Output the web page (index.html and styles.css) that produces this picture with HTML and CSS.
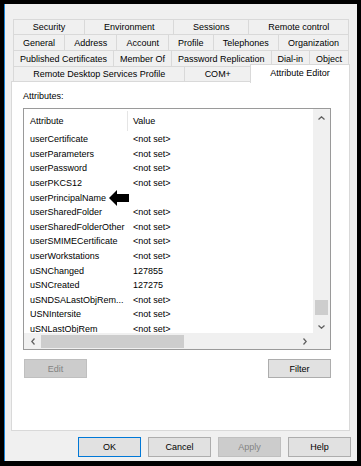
FILE: index.html
```html
<!DOCTYPE html>
<html lang="en">
<head>
    <meta charset="UTF-8">
    <meta name="viewport" content="width=device-width, initial-scale=1.0">
    <title>Properties</title>
    <link rel="stylesheet" href="styles.css">
</head>
<body>
    <div class="dialog">
        <div class="tabs">
            <div class="tab-row row-a">
                <div class="tab">Security</div>
                <div class="tab">Environment</div>
                <div class="tab">Sessions</div>
                <div class="tab">Remote control</div>
            </div>
            <div class="tab-row row-b">
                <div class="tab">General</div>
                <div class="tab">Address</div>
                <div class="tab">Account</div>
                <div class="tab">Profile</div>
                <div class="tab">Telephones</div>
                <div class="tab">Organization</div>
            </div>
            <div class="tab-row row-b">
                <div class="tab">Published Certificates</div>
                <div class="tab">Member Of</div>
                <div class="tab">Password Replication</div>
                <div class="tab">Dial-in</div>
                <div class="tab">Object</div>
            </div>
            <div class="tab-row row-a">
                <div class="tab">Remote Desktop Services Profile</div>
                <div class="tab">COM+</div>
                <div class="tab selected">Attribute Editor</div>
            </div>
        </div>

        <div class="panel">
            <div class="label">Attributes:</div>
            <div class="list">
                <div class="view">
                    <div class="list-head">
                        <div class="col-attr">Attribute</div>
                        <div class="col-val">Value</div>
                    </div>
                    <div class="row"><div class="attr">userCertificate</div><div class="val">&lt;not set&gt;</div></div>
                    <div class="row"><div class="attr">userParameters</div><div class="val">&lt;not set&gt;</div></div>
                    <div class="row"><div class="attr">userPassword</div><div class="val">&lt;not set&gt;</div></div>
                    <div class="row"><div class="attr">userPKCS12</div><div class="val">&lt;not set&gt;</div></div>
                    <div class="row">
                        <div class="attr">userPrincipalName
                            <svg class="pointer" width="20" height="16" viewBox="0 0 20 16"><polygon points="0,8 8,0 8,4 20,4 20,12 8,12 8,16" fill="#000"/></svg>
                        </div>
                        <div class="val"></div>
                    </div>
                    <div class="row"><div class="attr">userSharedFolder</div><div class="val">&lt;not set&gt;</div></div>
                    <div class="row"><div class="attr">userSharedFolderOther</div><div class="val">&lt;not set&gt;</div></div>
                    <div class="row"><div class="attr">userSMIMECertificate</div><div class="val">&lt;not set&gt;</div></div>
                    <div class="row"><div class="attr">userWorkstations</div><div class="val">&lt;not set&gt;</div></div>
                    <div class="row"><div class="attr">uSNChanged</div><div class="val">127855</div></div>
                    <div class="row"><div class="attr">uSNCreated</div><div class="val">127275</div></div>
                    <div class="row"><div class="attr">uSNDSALastObjRem...</div><div class="val">&lt;not set&gt;</div></div>
                    <div class="row"><div class="attr">USNIntersite</div><div class="val">&lt;not set&gt;</div></div>
                    <div class="row"><div class="attr">uSNLastObjRem</div><div class="val">&lt;not set&gt;</div></div>
                </div>
                <div class="vscroll">
                    <div class="sb-btn v">
                        <svg width="7" height="4" viewBox="0 0 7 4"><polyline points="0.5,3.5 3.5,0.8 6.5,3.5" fill="none" stroke="#606060" stroke-width="1.3"/></svg>
                    </div>
                    <div class="v-track"><div class="v-thumb"></div></div>
                    <div class="sb-btn v down">
                        <svg width="7" height="4" viewBox="0 0 7 4"><polyline points="0.5,0.5 3.5,3.2 6.5,0.5" fill="none" stroke="#606060" stroke-width="1.3"/></svg>
                    </div>
                </div>
                <div class="hscroll">
                    <div class="sb-btn h">
                        <svg width="4" height="7" viewBox="0 0 4 7"><polyline points="3.5,0.5 0.8,3.5 3.5,6.5" fill="none" stroke="#606060" stroke-width="1.3"/></svg>
                    </div>
                    <div class="h-track"><div class="h-thumb"></div></div>
                    <div class="sb-btn h">
                        <svg width="4" height="7" viewBox="0 0 4 7"><polyline points="0.5,0.5 3.2,3.5 0.5,6.5" fill="none" stroke="#606060" stroke-width="1.3"/></svg>
                    </div>
                </div>
                <div class="corner"></div>
            </div>
            <div class="list-actions">
                <button class="btn" disabled>Edit</button>
                <button class="btn">Filter</button>
            </div>
        </div>

        <div class="footer">
            <button class="btn default">OK</button>
            <button class="btn">Cancel</button>
            <button class="btn" disabled>Apply</button>
            <button class="btn">Help</button>
        </div>
    </div>
</body>
</html>
```

FILE: styles.css
```css
html, body {
    margin: 0;
    padding: 0;
}
body {
    background-color: #000;
    padding: 4px 4px 5px 4px;
    font-family: 'Liberation Sans', Arial, sans-serif;
    font-size: 9px;
    color: #000;
}
.dialog {
    box-sizing: border-box;
    width: 353px;
    height: 457px;
    background-color: #f0f0f0;
    border-left: 1px solid #1a86dc;
    padding: 15px 0 0 6px;
}
.tabs {
    margin-left: 2px;
    width: 336px;
}
.tab-row {
    display: flex;
    margin-bottom: -1px;
}
.row-a {
    height: 16px;
}
.row-b {
    height: 17px;
}
.tab {
    flex: 1 1 auto;
    box-sizing: border-box;
    border: 1px solid #d9d9d9;
    margin-right: -1px;
    padding: 0 4px;
    display: flex;
    align-items: center;
    justify-content: center;
    white-space: nowrap;
    background-color: #f0f0f0;
}
.tab:last-child {
    margin-right: 0;
}
.tab.selected {
    position: relative;
    z-index: 1;
    margin: -2px -1px -1px 0;
    border-bottom: none;
    background-color: #fff;
    padding-bottom: 3px;
}
.panel {
    box-sizing: border-box;
    width: 339px;
    height: 350px;
    background-color: #fff;
    border: 1px solid #d9d9d9;
    padding: 9px 0 0 11px;
}
.label {
    height: 11px;
    line-height: 11px;
    margin-bottom: 6px;
}
.list {
    box-sizing: border-box;
    width: 308px;
    height: 242px;
    border: 1px solid #9a9a9a;
    display: grid;
    grid-template-columns: 1fr 17px;
    grid-template-rows: 1fr 16px;
}
.view {
    overflow: hidden;
}
.list-head {
    display: flex;
    height: 23px;
    align-items: center;
}
.col-attr {
    width: 97px;
    padding-left: 6px;
    height: 20px;
    line-height: 20px;
    border-right: 1px solid #e5e5e5;
}
.col-val {
    padding-left: 5px;
}
.row {
    display: flex;
    align-items: center;
    height: 14.6px;
    white-space: nowrap;
}
.attr {
    width: 103px;
    padding-left: 6px;
    display: flex;
    align-items: center;
}
.pointer {
    margin-left: 3px;
    flex: none;
}
.vscroll {
    background-color: #f0f0f0;
    display: flex;
    flex-direction: column;
}
.sb-btn {
    display: flex;
    align-items: center;
    justify-content: center;
    flex: none;
}
.sb-btn.v {
    height: 17px;
}
.sb-btn.v.down {
    padding-top: 5px;
    height: 12px;
}
.sb-btn.h {
    width: 17px;
}
.v-track {
    flex: 1;
}
.v-thumb {
    margin: 174px 2px 0 2px;
    height: 15px;
    background-color: #cdcdcd;
}
.hscroll {
    background-color: #f0f0f0;
    display: flex;
}
.h-track {
    flex: 1;
    display: flex;
    align-items: center;
}
.h-thumb {
    width: 143px;
    height: 13px;
    background-color: #cdcdcd;
}
.corner {
    background-color: #f0f0f0;
}
.list-actions {
    width: 307px;
    display: flex;
    justify-content: space-between;
    margin: 9px 0 0 1px;
}
.btn {
    box-sizing: border-box;
    width: 63px;
    height: 19px;
    padding: 0;
    border: 1px solid #adadad;
    background-color: #e1e1e1;
    font-family: 'Liberation Sans', Arial, sans-serif;
    font-size: 9px;
    color: #000;
}
.btn:disabled {
    background-color: #cccccc;
    border-color: #bfbfbf;
    color: #838383;
}
.btn.default {
    border-color: #0078d7;
}
.footer {
    display: flex;
    justify-content: flex-end;
    gap: 7px;
    margin-top: 6px;
    padding-right: 6px;
}
.footer .btn {
    height: 20px;
}
```
